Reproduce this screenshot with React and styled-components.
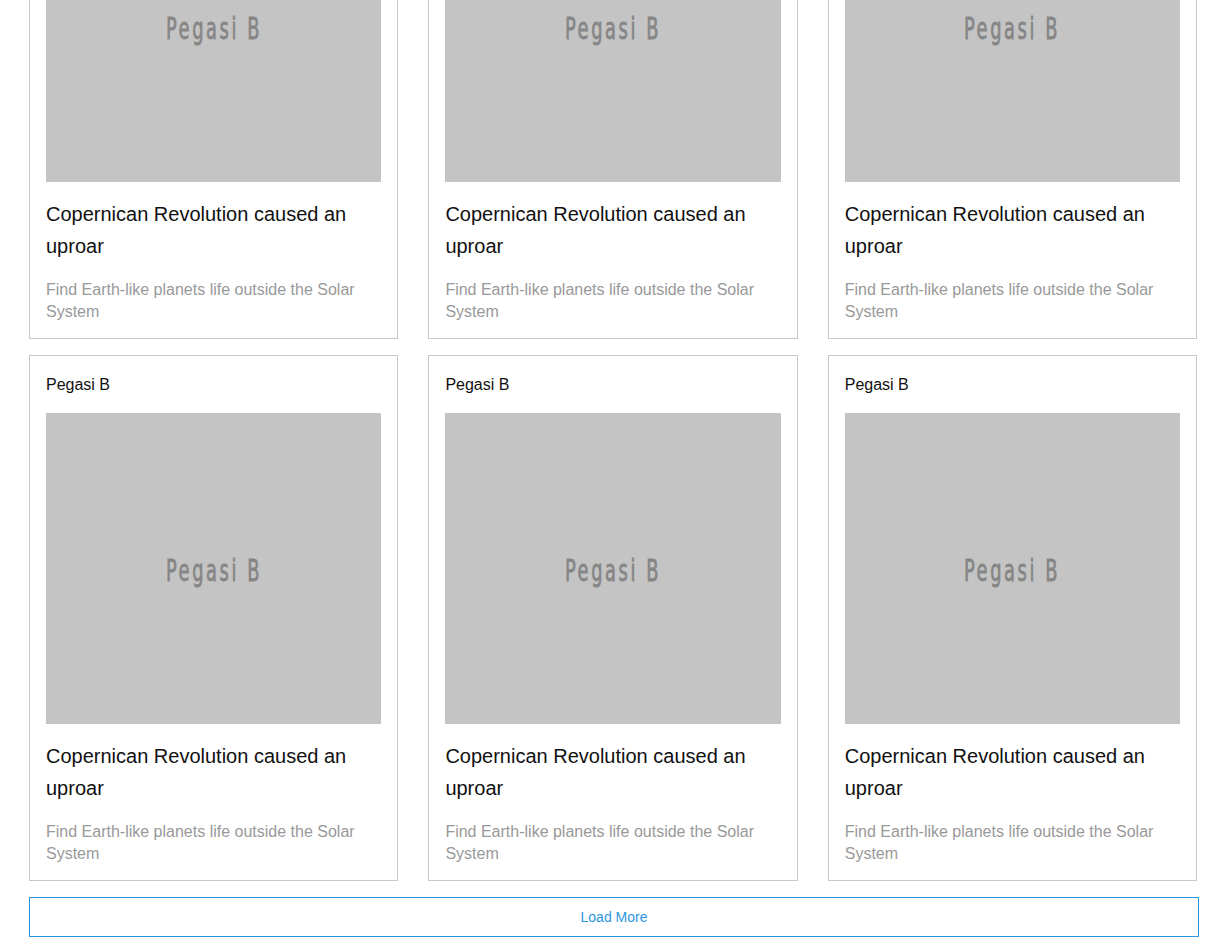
import React from 'react';
import styled, { createGlobalStyle } from 'styled-components';

const GlobalStyle = createGlobalStyle`
  html, body {
    margin: 0;
    padding: 0;
    background: #fff;
    font-family: "Liberation Sans", Arial, sans-serif;
  }
`;

const posts = Array.from({ length: 6 }, (_, i) => ({
  id: i,
  label: 'Pegasi B',
  title: 'Copernican Revolution caused an uproar',
  text: 'Find Earth-like planets life outside the Solar System',
}));

const Page = styled.main`
  width: 1170px;
  margin: -187px 0 0 29px;
  padding-bottom: 40px;
`;

const Grid = styled.div`
  display: grid;
  grid-template-columns: repeat(3, 369.25px);
  justify-content: space-between;
  width: 1168px;
  row-gap: 16px;
`;

const Card = styled.article`
  border: 1px solid #c8c8c8;
  padding: 16px 16px 15px;
  display: flex;
  flex-direction: column;
`;

const Label = styled.div`
  font-size: 16px;
  line-height: 24px;
  padding-top: 1px;
  color: #111;
  margin-bottom: 16px;
`;

const Thumb = styled.div`
  height: 311px;
  background: #c4c4c4;
  display: flex;
  align-items: center;
  justify-content: center;
  margin-bottom: 16px;
`;

const ThumbText = styled.span`
  font-family: "DejaVu Sans", sans-serif;
  font-stretch: condensed;
  font-weight: 400;
  font-size: 31px;
  line-height: 31px;
  padding-top: 3px;
  color: #868686;
  -webkit-text-stroke: 0.8px #868686;
  letter-spacing: 4px;
  transform: scaleX(0.64);
  white-space: nowrap;
`;

const Title = styled.h3`
  margin: 0 0 17px;
  font-size: 20px;
  font-weight: 400;
  line-height: 32px;
  color: #111;
`;

const Text = styled.p`
  margin: 0;
  font-size: 16px;
  line-height: 22px;
  color: #999;
`;

const LoadMore = styled.button`
  display: block;
  width: 100%;
  height: 40px;
  margin-top: 16px;
  border: 1px solid #2b96de;
  background: #fff;
  color: #2b96de;
  font-family: "Liberation Sans", Arial, sans-serif;
  font-size: 14px;
  cursor: pointer;
`;

const PostCard = ({ label, title, text }) => (
  <Card>
    <Label>{label}</Label>
    <Thumb>
      <ThumbText>Pegasi B</ThumbText>
    </Thumb>
    <Title>{title}</Title>
    <Text>{text}</Text>
  </Card>
);

export default function App() {
  return (
    <>
      <GlobalStyle />
      <Page>
        <Grid>
          {posts.map((post) => (
            <PostCard key={post.id} {...post} />
          ))}
        </Grid>
        <LoadMore>Load More</LoadMore>
      </Page>
    </>
  );
}
